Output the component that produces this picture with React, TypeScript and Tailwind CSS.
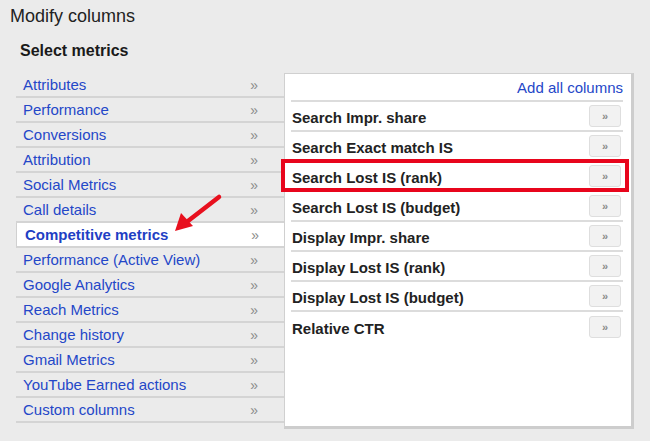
import React from "react";

const leftItems = [
  "Attributes",
  "Performance",
  "Conversions",
  "Attribution",
  "Social Metrics",
  "Call details",
  "Competitive metrics",
  "Performance (Active View)",
  "Google Analytics",
  "Reach Metrics",
  "Change history",
  "Gmail Metrics",
  "YouTube Earned actions",
  "Custom columns",
];

const rightItems = [
  "Search Impr. share",
  "Search Exact match IS",
  "Search Lost IS (rank)",
  "Search Lost IS (budget)",
  "Display Impr. share",
  "Display Lost IS (rank)",
  "Display Lost IS (budget)",
  "Relative CTR",
];

export default function App() {
  return (
    <div
      className="relative w-[650px] h-[441px] bg-[#ebebeb] overflow-hidden"
      style={{ fontFamily: '"Liberation Sans", Arial, sans-serif' }}
    >
      <div className="pt-[5px] pl-[10px] text-[18px] leading-[22px] text-[#222]">
        Modify columns
      </div>
      <div className="mt-[14px] ml-[20px] text-[16px] leading-[20px] font-bold text-[#1a1a1a]">
        Select metrics
      </div>
      <div className="mt-[12px] ml-[16px] flex">
        <div className="w-[268px]">
          {leftItems.map((item) => {
            const active = item === "Competitive metrics";
            return (
              <div
                key={item}
                className={
                  active
                    ? "h-[25px] border-b-2 border-[#d4d4d4] bg-white border-l border-l-[#d0d0d0] flex items-center justify-between pl-[8px] pr-[25px]"
                    : "h-[25px] border-b-2 border-[#d4d4d4] flex items-center justify-between pl-[7px] pr-[26px]"
                }
              >
                <span
                  className={
                    active
                      ? "text-[15px] leading-[18px] font-bold text-[#1f3fc4]"
                      : "text-[15px] leading-[18px] text-[#2447c8]"
                  }
                >
                  {item}
                </span>
                <span className="text-[14px] leading-[18px] text-[#8a8a8a]">»</span>
              </div>
            );
          })}
        </div>
        <div className="w-[350px] h-[356px] bg-white border-l border-t border-[#d0d0d0] border-r-[3px] border-b-[3px] border-r-[#cdcdcd] border-b-[#cdcdcd] pl-[6px] pr-[8px]">
          <div className="h-[28px] border-b-2 border-[#dcdcdc] flex items-center justify-end pt-[2px]">
            <span className="text-[15px] leading-[18px] text-[#2447c8]">Add all columns</span>
          </div>
          {rightItems.map((item, i) => (
            <div
              key={item}
              className={
                i === rightItems.length - 1
                  ? "relative h-[30px] flex items-center justify-between pl-[1px]"
                  : "relative h-[30px] border-b-2 border-[#dcdcdc] flex items-center justify-between pl-[1px]"
              }
            >
              <span className="pt-[3px] text-[15px] leading-[18px] font-bold text-[#222]">{item}</span>
              <span className="mr-[2px] w-[32px] h-[22px] rounded-[3px] bg-[#f2f2f2] border border-[#dedede] flex items-center justify-center text-[11px] font-bold text-[#8a8a8a]">
                »
              </span>
              {i === 2 && (
                <div className="absolute left-[-10px] right-[-6px] top-[-3px] bottom-[-2px] border-[4px] border-[#e8051c]" />
              )}
            </div>
          ))}
        </div>
      </div>
      <svg
        className="absolute left-0 top-0 pointer-events-none"
        width="650"
        height="441"
        viewBox="0 0 650 441"
      >
        <line x1="219" y1="197" x2="188" y2="221" stroke="#e8101e" strokeWidth="4.5" strokeLinecap="round" />
        <polygon points="175,231 181,213 193,226" fill="#e8101e" />
      </svg>
    </div>
  );
}
